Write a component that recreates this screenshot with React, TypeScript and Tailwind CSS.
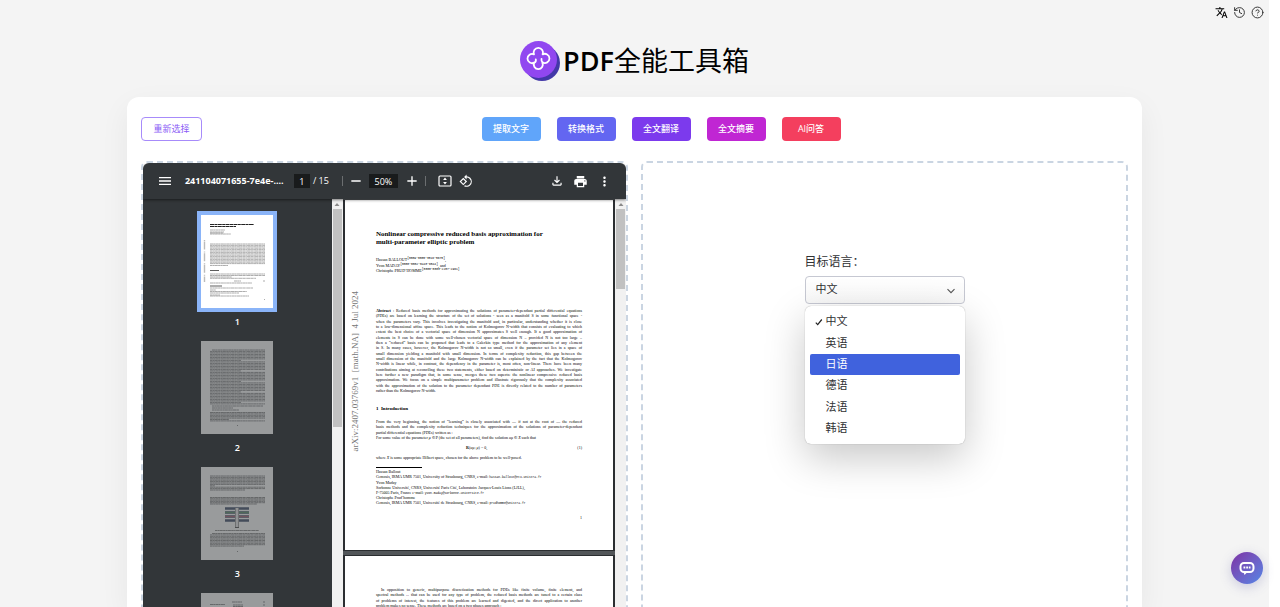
import { CircleHelp, History } from "lucide-react";
import {
  MdAdd,
  MdMenu,
  MdMoreVert,
  MdOutlineFileDownload,
  MdPrint,
  MdRemove,
  MdRotate90DegreesCcw,
  MdTranslate,
} from "react-icons/md";

const ACTIONS = [
  { label: "提取文字", color: "bg-[#60a5fa]" },
  { label: "转换格式", color: "bg-[#6366f1]" },
  { label: "全文翻译", color: "bg-[#7c3aed]" },
  { label: "全文摘要", color: "bg-[#c026d3]" },
  { label: "AI问答", color: "bg-[#f43f5e]" },
];

const LANGUAGES = ["中文", "英语", "日语", "德语", "法语", "韩语"];

const ABSTRACT = [
  ": Reduced basis methods for approximating the solutions of parameter-dependant partial differential equations",
  "(PDEs) are based on learning the structure of the set of solutions - seen as a manifold S in some functional space -",
  "when the parameters vary. This involves investigating the manifold and, in particular, understanding whether it is close",
  "to a low-dimensional affine space. This leads to the notion of Kolmogorov N-width that consists of evaluating to which",
  "extent the best choice of a vectorial space of dimension N approximates S well enough. If a good approximation of",
  "elements in S can be done with some well-chosen vectorial space of dimension N – provided N is not too large –",
  "then a “reduced” basis can be proposed that leads to a Galerkin type method for the approximation of any element",
  "in S. In many cases, however, the Kolmogorov N-width is not so small, even if the parameter set lies in a space of",
  "small dimension yielding a manifold with small dimension. In terms of complexity reduction, this gap between the",
  "small dimension of the manifold and the large Kolmogorov N-width can be explained by the fact that the Kolmogorov",
  "N-width is linear while, in contrast, the dependency in the parameter is, most often, non-linear. There have been many",
  "contributions aiming at reconciling these two statements, either based on deterministic or AI approaches. We investigate",
  "here further a new paradigm that, in some sense, merges these two aspects: the nonlinear compressive reduced basis",
  "approximation. We focus on a simple multiparameter problem and illustrate rigorously that the complexity associated",
  "with the approximation of the solution to the parameter dependant PDE is directly related to the number of parameters",
];

const PAGE_TWO = [
  "spectral methods ... that can be used for any type of problem, the reduced basis methods are tuned to a certain class",
  "of problems of interest, the features of this problem are learned and digested, and the direct application to another",
];

// [top, left, right] of each text row, in thumbnail units
const THUMB_ROWS: Record<number, number[][]> = {
  1: [
    [15, 9, 24], [17, 9, 23], [18, 9, 22], [19, 9, 30],
    ...Array.from({ length: 15 }, (_, i) => [29 + i * 1.4, 9, 64]),
    [50.5, 9, 27], [59, 9, 64], [60.5, 9, 64], [62, 9, 31], [63.3, 9, 55],
    [66, 33, 40], [66, 62, 64], [68, 9, 51], [73, 9, 52], [75, 9, 15],
    [76.5, 9, 46], [78, 9, 38], [80, 9, 19], [81, 9, 48], [84.5, 63, 64],
  ],
  2: [
    [9, 11, 64],
    ...Array.from({ length: 36 }, (_, i) => [10.4 + i * 1.5, 9, i % 7 === 6 ? 40 : 64]),
    [65, 11, 62], [67, 11, 32], [69, 11, 38],
    ...Array.from({ length: 7 }, (_, i) => [71.5 + i * 1.4, 9, i === 5 ? 28 : 64]),
    [84.5, 36, 37],
  ],
  3: [
    ...Array.from({ length: 10 }, (_, i) => [9 + i * 1.4, 9, i === 7 ? 14 : 64]),
    [23, 9, 44],
    ...Array.from({ length: 6 }, (_, i) => [30.5 + i * 1.3, 9, i === 5 ? 56 : 64]),
    [63.5, 14, 58],
    ...Array.from({ length: 10 }, (_, i) => [66.5 + i * 1.4, i ? 9 : 11, i === 9 ? 43 : 64]),
    [84.5, 36, 37],
  ],
  4: [[9, 31, 41], [9, 62, 64], [11.5, 9, 24], [12, 32, 42], [12, 62, 64], [13.5, 32, 42]],
};

function Logo() {
  return (
    <svg viewBox="0 0 40 40" className="size-10" aria-hidden="true">
      <circle cx="22" cy="22" r="18" fill="#4338a8" />
      <circle cx="18.5" cy="18.5" r="18.5" fill="#9147f0" />
      <path
        d="M21.5 17.8C21.2 19.5 21.6 20.6 22.6 21.4A4.6 4.6 0 1 0 22.6 13.4A4.7 4.7 0 1 0 14 13.4A4.6 4.6 0 1 0 14.3 21.6A4.5 4.5 0 1 0 22.3 21.6M14.3 21.6C15.6 21.2 16.1 20 15.8 18.4"
        fill="none"
        stroke="#fff"
        strokeWidth="1.8"
        strokeLinecap="round"
        strokeLinejoin="round"
      />
    </svg>
  );
}

function FitPageIcon() {
  return (
    <svg viewBox="0 0 16 16" className="size-4" aria-hidden="true">
      <rect x="2" y="3" width="12" height="10" rx="1" fill="none" stroke="currentColor" strokeWidth="1.2" />
      <path d="M8 4.6 9.9 7H6.1zM8 11.4 6.1 9h3.8z" fill="currentColor" />
    </svg>
  );
}

function Thumbnail({ page }: { page: number }) {
  const selected = page === 1;

  return (
    <li className="flex flex-col items-center">
      <svg
        viewBox="0 0 72 93"
        className={selected ? "h-[93px] w-[72px] bg-white ring-4 ring-[#8ab4f8]" : "h-[93px] w-[72px] bg-white opacity-50"}
        aria-hidden="true"
      >
        {THUMB_ROWS[page].map(([y, left, right], i) => (
          <path
            key={i}
            d={`M${left} ${y}H${right}`}
            stroke={selected ? "#777" : "#555"}
            strokeWidth="0.6"
            strokeDasharray={i % 2 ? "2.6 .3 1.3 .2 3.4 .3" : "3.1 .2 1.8 .3"}
          />
        ))}
        {selected && (
          <>
            <path d="M9 9.5H53M9 11.5H35" stroke="#222" strokeWidth="1.1" strokeDasharray="4 .4 3 .4" />
            <path d="M9 55.5H18M9 71H21" stroke="#333" strokeWidth="0.8" />
            <path d="M3.5 25V67" stroke="#bbb" strokeWidth="1.4" strokeDasharray="1 .6 8 2" />
          </>
        )}
        {page === 3 && (
          <>
            <path d="M24 41.5H48M24 45.5H48M24 49.5H48M24 53.5H48" stroke="#56637c" strokeWidth="2.4" />
            <path d="M24 45.5H48" stroke="#6c9a79" strokeWidth="1.4" />
            <path d="M24 49.5H48" stroke="#b27283" strokeWidth="1.4" />
            <path d="M36 41V61" stroke="#666" strokeWidth="4" />
            <path d="M36 41V60" stroke="#eee" strokeWidth="3" />
          </>
        )}
      </svg>
      {page < 4 && (
        <span className="mt-2 mb-[13px] text-[9px] leading-3 font-semibold text-white">{page}</span>
      )}
    </li>
  );
}

function ScrollTrack({ thumb }: { thumb: string }) {
  return (
    <div className="flex w-[11px] shrink-0 flex-col items-center bg-[#f1f1f1]">
      <svg viewBox="0 0 10 10" className="size-[10px] shrink-0" aria-hidden="true">
        <path d="M5 4 7.5 7h-5z" fill="#8a8a8a" />
      </svg>
      <div className={`w-[9px] bg-[#c1c1c1] ${thumb}`} />
    </div>
  );
}

function Author({ name, id, end }: { name: string; id: string; end: string }) {
  return (
    <p className="flex">
      {name}
      <span className="-mt-px font-['Liberation_Mono',monospace] text-[3px]">[{id}]</span>
      {end}
    </p>
  );
}

function Email({ address }: { address: string }) {
  return <span className="font-['Liberation_Mono',monospace] text-[3px] leading-none">{address}</span>;
}

function PaperPages() {
  return (
    <div className="flex min-w-0 flex-1 flex-col gap-1 overflow-hidden bg-[#525659] pt-px font-['Liberation_Serif',serif] text-[4px] leading-[5px] text-black">
      <article className="flex h-[351px] shrink-0 border-x-2 border-b border-[#2b2e31] bg-white">
        <div className="flex w-[31px] shrink-0 justify-center">
          <p className="mt-[91px] mr-[11px] rotate-180 self-start text-[9px] leading-[10px] whitespace-pre text-[#777] [writing-mode:vertical-rl]">
            arXiv:2407.03769v1  [math.NA]  4 Jul 2024
          </p>
        </div>
        <div className="min-w-0 flex-1 pt-[30px] pr-[31px] whitespace-nowrap">
          <h2 className="text-[7px] leading-2 font-bold">
            Nonlinear compressive reduced basis approximation for
            <br />
            multi-parameter elliptic problem
          </h2>
          <div className="mt-[11px] flex h-4 flex-col justify-between">
            <Author name="Hassan BALLOUT" id="0009−0005−3516−5675" end="," />
            <Author name="Yvon MADAY" id="0000−0002−0443−6544" end=", and" />
            <Author name="Christophe PRUD’HOMME" id="0000−0003−2287−2961" end="" />
          </div>
          <div className="mt-[35px] flex h-[85px] flex-col justify-between">
            {ABSTRACT.map((line, i) => (
              <p key={line} className="[text-align-last:justify]">
                {i === 0 && <b>Abstract </b>}
                {line}
              </p>
            ))}
            <p>rather than the Kolmogorov N-width.</p>
          </div>
          <h3 className="mt-3 text-[5px] leading-2 font-bold">1&nbsp; Introduction</h3>
          <div className="mt-[6px] flex h-[21px] flex-col justify-between">
            <p className="[text-align-last:justify]">
              From the very beginning, the notion of “learning” is closely associated with — if not at the root of — the reduced
            </p>
            <p className="[text-align-last:justify]">
              basis methods and the complexity reduction techniques for the approximation of the solutions of parameter-dependant
            </p>
            <p>partial differential equations (PDEs) written as :</p>
            <p>
              For some value of the parameter <i>μ</i> ∈ P (the set of all parameters), find the solution <i>u</i>μ ∈ <i>X</i> such that
            </p>
          </div>
          <div className="mt-[5px] flex justify-between">
            <span />
            <span>
              <b>R</b>(<i>u</i>μ; <i>μ</i>) = 0,
            </span>
            <span>(1)</span>
          </div>
          <p className="mt-[5px]">
            where <i>X</i> is some appropriate Hilbert space, chosen for the above problem to be well-posed.
          </p>
          <hr className="mt-[7px] w-[46px] border-black" />
          <div className="mt-px flex h-9 flex-col justify-between">
            <p>
              Hassan Ballout
              <br />
              Cemosis, IRMA UMR 7501, University of Strasbourg, CNRS, e-mail: <Email address="hassan.ballout@etu.unistra.fr" />
            </p>
            <p>
              Yvon Maday
              <br />
              Sorbonne Université, CNRS, Université Paris Cité, Laboratoire Jacques-Louis Lions (LJLL),
              <br />
              F-75005 Paris, France e-mail: <Email address="yvon.maday@sorbonne-universite.fr" />
            </p>
            <p>
              Christophe Prud’homme
              <br />
              Cemosis, IRMA UMR 7501, Université de Strasbourg, CNRS, e-mail: <Email address="prudhomme@unistra.fr" />
            </p>
          </div>
          <p className="mt-[10px] text-right">1</p>
        </div>
      </article>
      <article className="h-[351px] shrink-0 border-x-2 border-t border-[#2b2e31] bg-white px-[31px] pt-[31px] whitespace-nowrap">
        <div className="flex h-[21px] flex-col justify-between">
          <p className="pl-[5px] [text-align-last:justify]">
            In opposition to generic, multipurpose discretization methods for PDEs like finite volume, finite element, and
          </p>
          {PAGE_TWO.map((line) => (
            <p key={line} className="[text-align-last:justify]">
              {line}
            </p>
          ))}
          <p>problem makes no sense. These methods are based on a two phases approach :</p>
        </div>
      </article>
    </div>
  );
}

function PdfViewer() {
  return (
    <section className="flex min-w-0 flex-1 flex-col overflow-hidden rounded-md border-2 border-dashed border-slate-300">
      <div className="z-10 flex h-9 shrink-0 items-center rounded-t-md bg-[#323639] pr-[14px] pl-[14px] text-[9px] text-white shadow-[0_1px_3px_rgba(0,0,0,0.5)]">
        <button aria-label="菜单">
          <MdMenu className="size-4" />
        </button>
        <span className="ml-3 w-[97px] font-bold whitespace-nowrap">241104071655-7e4e-....</span>
        <input
          aria-label="页码"
          defaultValue="1"
          className="ml-3 h-[14px] w-4 bg-[#191b1c] text-center"
        />
        <span className="ml-[3px] w-4 whitespace-nowrap">/ 15</span>
        <span className="ml-[13px] h-[10px] w-px bg-[#6b6e70]" />
        <button aria-label="缩小" className="ml-[5px]">
          <MdRemove className="size-4" />
        </button>
        <input
          aria-label="缩放"
          defaultValue="50%"
          className="ml-[5px] h-[14px] w-[29px] bg-[#191b1c] text-center"
        />
        <button aria-label="放大" className="ml-[6px]">
          <MdAdd className="size-4" />
        </button>
        <span className="ml-[5px] h-[10px] w-px bg-[#6b6e70]" />
        <button aria-label="适合页面" className="ml-[11px]">
          <FitPageIcon />
        </button>
        <button aria-label="旋转" className="ml-[6px]">
          <MdRotate90DegreesCcw className="size-[14px]" />
        </button>
        <div className="ml-auto flex items-center gap-[9px]">
          <button aria-label="下载">
            <MdOutlineFileDownload className="size-[14px]" />
          </button>
          <button aria-label="打印">
            <MdPrint className="size-[15px]" />
          </button>
          <button aria-label="更多">
            <MdMoreVert className="size-[15px]" />
          </button>
        </div>
      </div>
      <div className="flex min-h-0 flex-1 bg-[#323639]">
        <ul className="w-[189px] shrink-0 overflow-hidden pt-4">
          {[1, 2, 3, 4].map((page) => (
            <Thumbnail key={page} page={page} />
          ))}
        </ul>
        <ScrollTrack thumb="h-[218px]" />
        <PaperPages />
        <ScrollTrack thumb="h-[80px]" />
      </div>
    </section>
  );
}

function TranslatePanel() {
  return (
    <section className="flex min-w-0 flex-1 flex-col items-center rounded-md border-2 border-dashed border-slate-300 pt-[91px] text-[#303133]">
      <div className="relative w-40">
        <label htmlFor="language" className="block text-[12px] leading-4">
          目标语言：
        </label>
        <div className="relative mt-[6px]">
          <select
            id="language"
            defaultValue="中文"
            className="block h-7 w-full appearance-none rounded border border-[#c6c8d2] bg-linear-to-b from-white to-[#f8f8f8] px-[10px] pb-[2px] text-[11px]"
          >
            {LANGUAGES.map((language) => (
              <option key={language}>{language}</option>
            ))}
          </select>
          <svg viewBox="0 0 10 10" className="pointer-events-none absolute top-[10px] right-[9px] size-[10px]" aria-hidden="true">
            <path d="M1.5 3.2 5 6.7l3.5-3.5" fill="none" stroke="#555" strokeWidth="1.1" />
          </svg>
        </div>
        <ul
          role="listbox"
          aria-label="目标语言"
          className="absolute top-full mt-[2px] grid h-[138px] w-full grid-rows-6 rounded-md bg-white p-[5px] text-[11px] shadow-[0_0_1px_rgba(0,0,0,0.4),0_14px_40px_rgba(0,0,0,0.22)]"
        >
          {LANGUAGES.map((language) => (
            <li
              key={language}
              role="option"
              aria-selected={language === "中文"}
              className={
                language === "日语"
                  ? "flex items-center rounded-xs bg-[#4062dd] pl-[5px] text-white"
                  : "flex items-center pl-[5px]"
              }
            >
              <span className="w-[11px]">
                {language === "中文" && (
                  <svg viewBox="0 0 8 8" className="size-2" aria-hidden="true">
                    <path d="M.8 4.6 2.7 6.6 6.8 1.5" fill="none" stroke="#222" strokeWidth="1.2" />
                  </svg>
                )}
              </span>
              {language}
            </li>
          ))}
        </ul>
      </div>
    </section>
  );
}

export default function App() {
  return (
    <div className="h-screen overflow-hidden bg-white pr-[11px] font-['Open_Sans','Noto_Sans_CJK_SC',sans-serif]">
      <div className="flex h-full flex-col bg-[#f4f4f4]">
        <nav className="flex h-[25px] shrink-0 items-center justify-end gap-[5px] pr-[5px] text-[#333]">
          <button aria-label="语言">
            <MdTranslate className="size-[13px] text-black" />
          </button>
          <button aria-label="历史">
            <History className="size-[13px]" strokeWidth={1.8} />
          </button>
          <button aria-label="帮助">
            <CircleHelp className="size-[13px]" strokeWidth={1.8} />
          </button>
        </nav>
        <header className="flex h-[72px] shrink-0 items-center justify-center gap-[3px]">
          <Logo />
          <h1 className="flex items-center text-[27px] leading-8 text-black">
            <span className="font-semibold">PDF</span>
            全能工具箱
          </h1>
        </header>
        <main className="mx-auto flex min-h-0 w-4/5 flex-1 flex-col rounded-t-xl bg-white px-[14px] pt-5 shadow-[0_10px_30px_rgba(0,0,0,0.06)]">
          <div className="flex shrink-0 text-[9px]">
            <button className="h-6 w-[61px] rounded border border-[#a78bfa] text-[#8b5cf6]">重新选择</button>
            <div className="flex flex-1 justify-center gap-4 pr-2">
              {ACTIONS.map((action) => (
                <button key={action.label} className={`h-6 w-[59px] rounded font-medium text-white ${action.color}`}>
                  {action.label}
                </button>
              ))}
            </div>
          </div>
          <div className="mt-5 flex min-h-0 flex-1 gap-[13px] overflow-hidden">
            <div className="-mb-3 flex min-w-0 flex-1">
              <PdfViewer />
            </div>
            <div className="-mb-3 flex min-w-0 flex-1">
              <TranslatePanel />
            </div>
          </div>
        </main>
      </div>
      <button
        aria-label="聊天"
        className="fixed right-[17px] bottom-[23px] flex size-8 items-center justify-center rounded-full bg-linear-to-br from-[#7a2fa5] to-[#4f86e6] shadow-[0_3px_12px_rgba(80,80,160,0.25)]"
      >
        <svg viewBox="0 0 16 16" className="size-4" aria-hidden="true">
          <rect x="1.5" y="3" width="13" height="9" rx="3.5" fill="none" stroke="#fff" strokeWidth="2" />
          <path d="M4.5 12h4l-3 3z" fill="#fff" />
          <path d="M4.5 7.5h1.8M7.2 7.5H9M9.8 7.5h1.7" stroke="#fff" strokeWidth="1.8" />
        </svg>
      </button>
    </div>
  );
}
